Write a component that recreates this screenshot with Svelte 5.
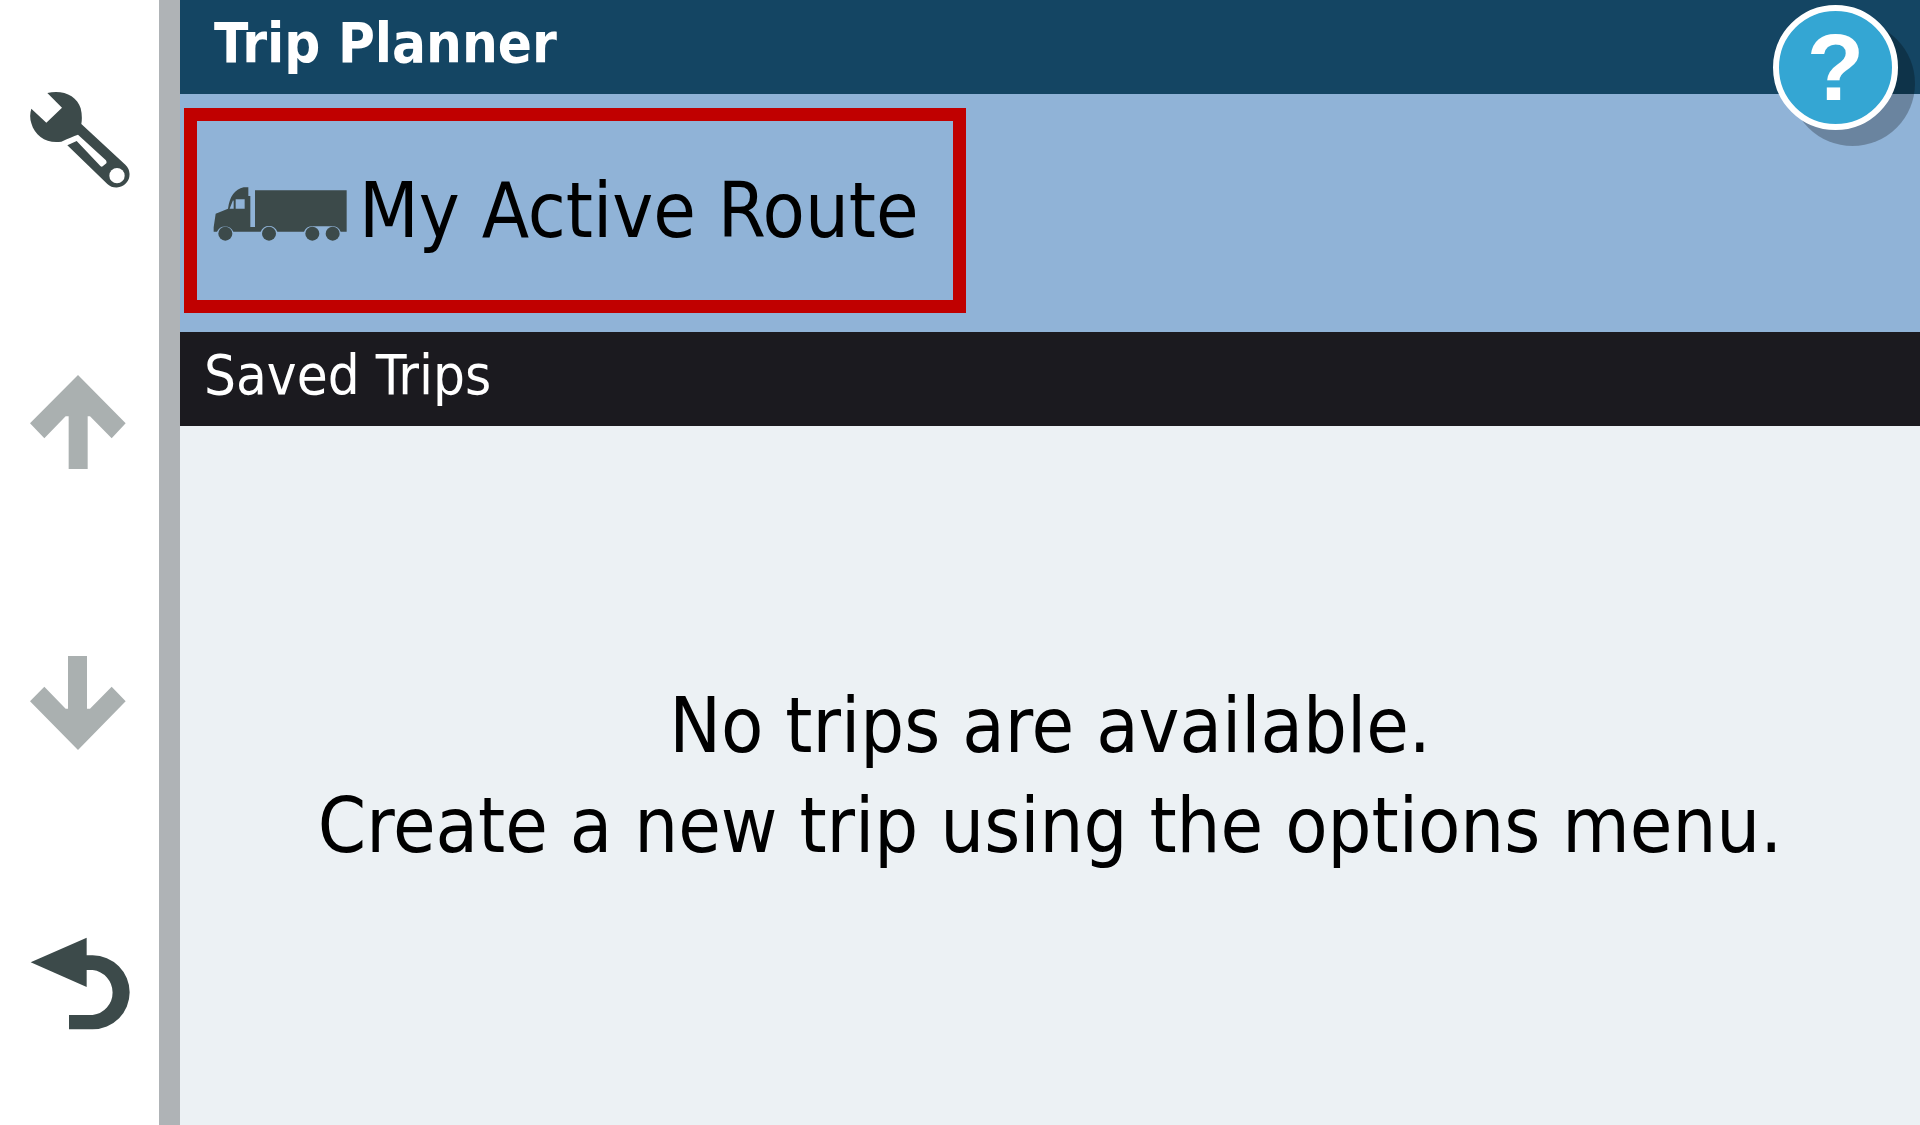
<script lang="ts">
	interface Props {
		title?: string;
		trips?: string[];
	}

	let { title = 'Trip Planner', trips = [] }: Props = $props();
</script>

<div class="screen">
	<nav class="toolbar" aria-label="Controls">
		<button aria-label="Options">
			<svg viewBox="90 63 300 300">
				<path d="M142 69 C188 58 231 77 242 115 Q248 139 244 162 L376 284 A39 39 0 0 1 322 342 L202 226 L230 213 L299 286 Q304 293 309 288 L319 280 Q321 275 317 270 L234 194 Q214 201 184 215 C142 222 105 200 94 160 Q87 138 94 116 L139 158 L186 113 Z" />
				<circle cx="351" cy="317" r="23" fill="#fff" />
			</svg>
		</button>
		<button aria-label="Scroll up" disabled>
			<svg viewBox="90 65 300 300">
				<path d="M234 74 L377 219 L335 264 L270 198 H263 V356 H206 V198 H197 L133 264 L90 219 Z" />
			</svg>
		</button>
		<button aria-label="Scroll down" disabled>
			<svg viewBox="90 39 300 300">
				<path d="M234 330 L377 184 L335 140 L270 206 H261 V48 H204 V206 H197 L133 140 L90 184 Z" />
			</svg>
		</button>
		<button aria-label="Back">
			<svg viewBox="90 41 300 300">
				<path d="M92 126 L260 52 V105 H278 A111 111 0 0 1 278 327 H207 V284 H278 A68 68 0 0 0 278 149 H260 V200 Z" />
			</svg>
		</button>
	</nav>

	<main>
		<header>
			<h1>{title}</h1>
			<button class="help" aria-label="Help">?</button>
		</header>

		<div class="active-row">
			<button class="active-route">
				<svg viewBox="130 272 402 180">
					<path fill-rule="evenodd" d="M132 424 V411 L138 370 L175 355 Q182 300 222 291 H236 V317 H242 V410 H256 V300 H531 V424 H513 A27 27 0 0 0 488 408 H428 A27 27 0 0 0 403 424 H323 A27 27 0 0 0 273 424 H191 A27 27 0 0 0 142 424 Z M198 327 V355 H225 V327 Z M190 330 L180 355 H192 V332 Z" />
					<circle cx="167" cy="430" r="21" />
					<circle cx="298" cy="430" r="21" />
					<circle cx="428" cy="430" r="21" />
					<circle cx="489" cy="430" r="21" />
				</svg>
				<span>My Active Route</span>
			</button>
		</div>

		<h2>Saved Trips</h2>

		<section class="trips">
			{#each trips as trip}
				<p>{trip}</p>
			{:else}
				<p>No trips are available.</p>
				<p>Create a new trip using the options menu.</p>
			{/each}
		</section>
	</main>
</div>

<style>
	:global(body) {
		margin: 0;
	}

	.screen {
		display: flex;
		min-height: 100vh;
		font-family: 'DejaVu Sans Condensed', 'DejaVu Sans', sans-serif;
		color: #000;
		background: #ecf1f4;
	}

	button {
		margin: 0;
		padding: 0;
		border: none;
		background: none;
		font: inherit;
		color: inherit;
		cursor: pointer;
	}

	.toolbar {
		display: grid;
		grid-template-rows: repeat(4, 1fr);
		flex: none;
		width: 159px;
		background: #fff;
		border-right: 21px solid #afb3b6;
	}

	.toolbar button {
		display: flex;
		align-items: center;
		justify-content: center;
	}

	.toolbar svg {
		width: 100px;
		height: 100px;
		fill: #3c4a4a;
	}

	.toolbar button:disabled {
		cursor: default;
	}

	.toolbar button:disabled svg {
		fill: #aab0b0;
	}

	main {
		display: flex;
		flex-direction: column;
		flex: 1;
		min-width: 0;
	}

	header {
		position: relative;
		height: 94px;
		padding: 0 34px;
		background: #144563;
		color: #fff;
	}

	h1 {
		margin: 0;
		font-size: 56px;
		line-height: 86px;
		font-weight: 700;
	}

	.help {
		position: absolute;
		top: 5px;
		right: 22px;
		width: 125px;
		height: 125px;
		border: 6px solid #fff;
		border-radius: 50%;
		background: #34a6d3;
		box-shadow: 17px 16px 0 rgba(0, 0, 0, 0.26);
		font-family: 'Liberation Sans', sans-serif;
		font-size: 94px;
		line-height: 110px;
		font-weight: 700;
		color: #fff;
	}

	.active-row {
		padding: 14px 4px 19px;
		background: #90b3d7;
	}

	.active-route {
		display: flex;
		align-items: center;
		gap: 12px;
		height: 205px;
		padding: 0 34px 0 16px;
		border: 13px solid #c00000;
		font-size: 77px;
		white-space: nowrap;
	}

	.active-route svg {
		width: 134px;
		height: 60px;
		fill: #3c4a4a;
	}

	h2 {
		margin: 0;
		padding: 0 24px;
		height: 94px;
		background: #1b1a1f;
		color: #fff;
		font-size: 56px;
		line-height: 86px;
		font-weight: 400;
	}

	.trips {
		display: flex;
		flex-direction: column;
		align-items: center;
		justify-content: center;
		flex: 1;
		text-align: center;
		font-size: 77px;
		line-height: 100px;
	}

	.trips p {
		margin: 0;
	}
</style>
